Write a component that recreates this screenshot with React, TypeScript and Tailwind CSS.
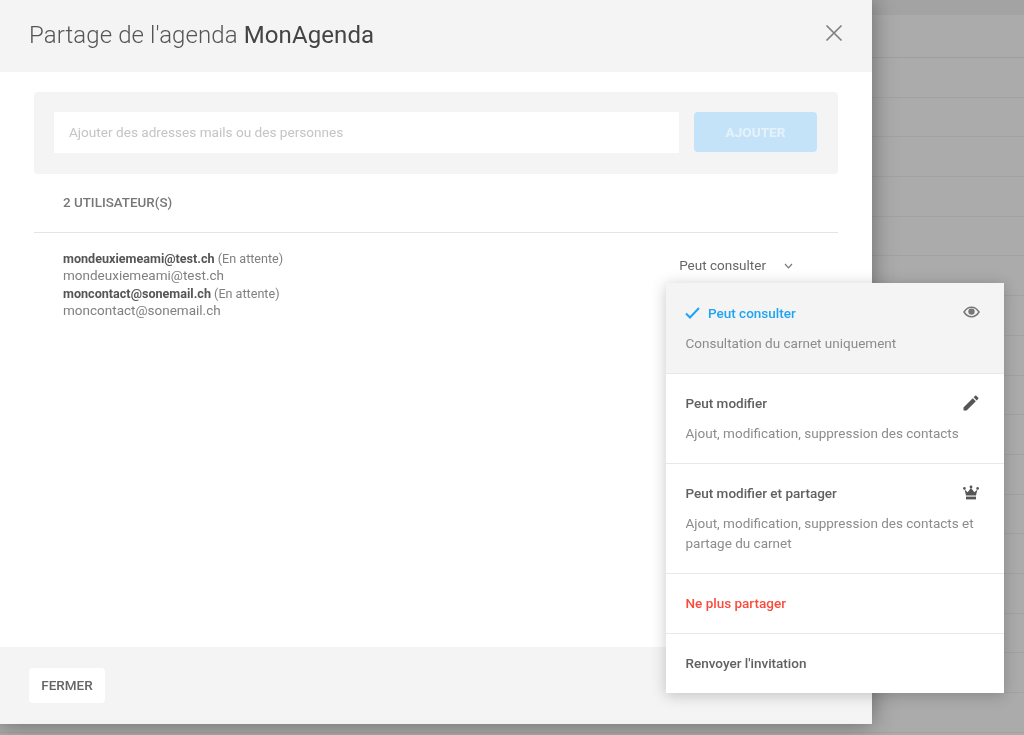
import { MdEdit } from "react-icons/md";

const backdropRows = Array.from({ length: 17 });

function Crown() {
  return (
    <svg width="16" height="16" viewBox="0 0 16 16" fill="#555" className="block">
      <circle cx="8" cy="2" r="1.4" />
      <circle cx="1.4" cy="3.4" r="1.3" />
      <circle cx="14.6" cy="3.4" r="1.3" />
      <path d="M1.6 4.5L4.6 7.2L8 3L11.4 7.2L14.4 4.5L13 10.5H3Z" />
      <rect x="3" y="11.6" width="10" height="2.8" />
    </svg>
  );
}

function Eye() {
  return (
    <svg width="17" height="12" viewBox="0 0 17 12" className="-mt-[2px] block">
      <path d="M1 6C3 2.8 5.5 1.2 8.5 1.2S14 2.8 16 6C14 9.2 11.5 10.8 8.5 10.8S3 9.2 1 6Z" fill="none" stroke="#777" strokeWidth="1.5" />
      <circle cx="8.5" cy="5.6" r="3.2" fill="#777" />
    </svg>
  );
}

interface MenuItemProps {
  title: string;
  desc?: string;
  icon?: React.ReactNode;
  active?: boolean;
  titleClass?: string;
  heightClass: string;
}

function MenuItem({ title, desc, icon, active, titleClass, heightClass }: MenuItemProps) {
  return (
    <div className={`pl-[19.5px] pr-[24px] border-b border-[#e8e8e8] last:border-b-0 ${heightClass} ${active ? "bg-[#f4f4f4] pt-[20px]" : "bg-white pt-[19px]"}`}>
      <div className="flex items-center justify-between h-[20px]">
        <div className={`flex items-center text-[13.5px] font-medium ${titleClass ?? "text-[#606060]"}`}>
          {active && (
            <svg width="15" height="12" viewBox="0 0 15 12" fill="none" stroke="#1fa3f5" strokeWidth="2" className="-ml-[1px] mr-[8.5px]">
              <path d="M1 6.5L5 10.5L14 1" />
            </svg>
          )}
          {title}
        </div>
        {icon}
      </div>
      {desc && <p className="mt-[10px] text-[13.5px] leading-[20px] text-[#8c8c8c]">{desc}</p>}
    </div>
  );
}

export default function App() {
  return (
    <div className="relative h-[735px] w-full overflow-hidden bg-[#ababab] font-['Roboto',sans-serif] blur-[0.4px]">
      {/* page behind the overlay */}
      <div className="h-[15px] bg-[#a3a3a3]" />
      <div className="h-[43px] border-b border-[#9f9f9f]" />
      {backdropRows.map((_, i) => (
        <div key={i} className="h-[39.7px] border-b border-[#a2a2a2]" />
      ))}

      {/* modal */}
      <div className="absolute left-0 top-0 flex h-[724px] w-[872px] flex-col bg-white shadow-[0_0_22px_rgba(0,0,0,0.4)]">
        <div className="flex h-[72px] shrink-0 items-center justify-between bg-[#f4f4f4] pl-[29px] pr-[29px]">
          <h1 className="-mt-[2px] text-[24px] font-light tracking-[0.1px] text-[#555]">
            Partage de l'agenda <span className="font-normal text-[#444]">MonAgenda</span>
          </h1>
          <svg width="18" height="18" viewBox="0 0 18 18" fill="none" stroke="#808080" strokeWidth="1.7" className="-mt-[6px]">
            <path d="M1.5 1.5L16.5 16.5M16.5 1.5L1.5 16.5" />
          </svg>
        </div>

        <div className="flex-1 px-[34px] pt-[20px]">
          <div className="flex h-[82px] items-start gap-[15px] rounded bg-[#f4f4f4] py-[20px] pl-[20px] pr-[21px]">
            <div className="flex h-[41px] flex-1 items-center bg-white pl-[15px] text-[13.6px] text-[#c4c4c4]">
              Ajouter des adresses mails ou des personnes
            </div>
            <button className="h-[40px] w-[123px] rounded bg-[#c5e3f8] text-[13.6px] font-bold text-[#e6f2fb]">AJOUTER</button>
          </div>

          <div className="flex h-[59px] items-center border-b border-[#e4e4e4] pl-[29px] text-[13.4px] font-medium text-[#777]">
            2 UTILISATEUR(S)
          </div>

          <div className="flex items-start justify-between pl-[29px] pr-[45px] pt-[17px]">
            <div className="text-[13.5px] leading-[17.4px] text-[#808080]">
              <p className="text-[12.6px]"><span className="font-bold text-[#555]">mondeuxiemeami@test.ch</span> (En attente)</p>
              <p>mondeuxiemeami@test.ch</p>
              <p className="text-[12.6px]"><span className="font-bold text-[#555]">moncontact@sonemail.ch</span> (En attente)</p>
              <p>moncontact@sonemail.ch</p>
            </div>
            <div className="mt-[7px] flex items-center gap-[18px] text-[13.5px] leading-[17px] text-[#666]">
              Peut consulter
              <svg width="9" height="6" viewBox="0 0 9 6" fill="none" stroke="#777" strokeWidth="1.2">
                <path d="M1 1L4.5 4.8L8 1" />
              </svg>
            </div>
          </div>
        </div>

        <div className="flex h-[77px] shrink-0 items-center bg-[#f4f4f4] pl-[29px]">
          <button className="h-[35px] w-[76px] rounded bg-white text-[13.5px] font-medium text-[#666]">FERMER</button>
        </div>
      </div>

      {/* permissions dropdown */}
      <div className="absolute left-[666px] top-[283px] w-[338px] bg-white shadow-[0_2px_14px_rgba(0,0,0,0.22)]">
        <MenuItem
          active
          title="Peut consulter"
          titleClass="text-[#1fa3f5]"
          desc="Consultation du carnet uniquement"
          heightClass="h-[91px]"
          icon={<Eye />}
        />
        <MenuItem
          title="Peut modifier"
          desc="Ajout, modification, suppression des contacts"
          heightClass="h-[90px]"
          icon={<MdEdit size={20} color="#555" className="-mr-[1px]" />}
        />
        <MenuItem
          title="Peut modifier et partager"
          desc="Ajout, modification, suppression des contacts et partage du carnet"
          heightClass="h-[110px]"
          icon={<span className="mr-[1px]"><Crown /></span>}
        />
        <MenuItem title="Ne plus partager" titleClass="text-[#fb4a3c]" heightClass="h-[60px]" />
        <MenuItem title="Renvoyer l'invitation" heightClass="h-[59px]" />
      </div>
    </div>
  );
}
